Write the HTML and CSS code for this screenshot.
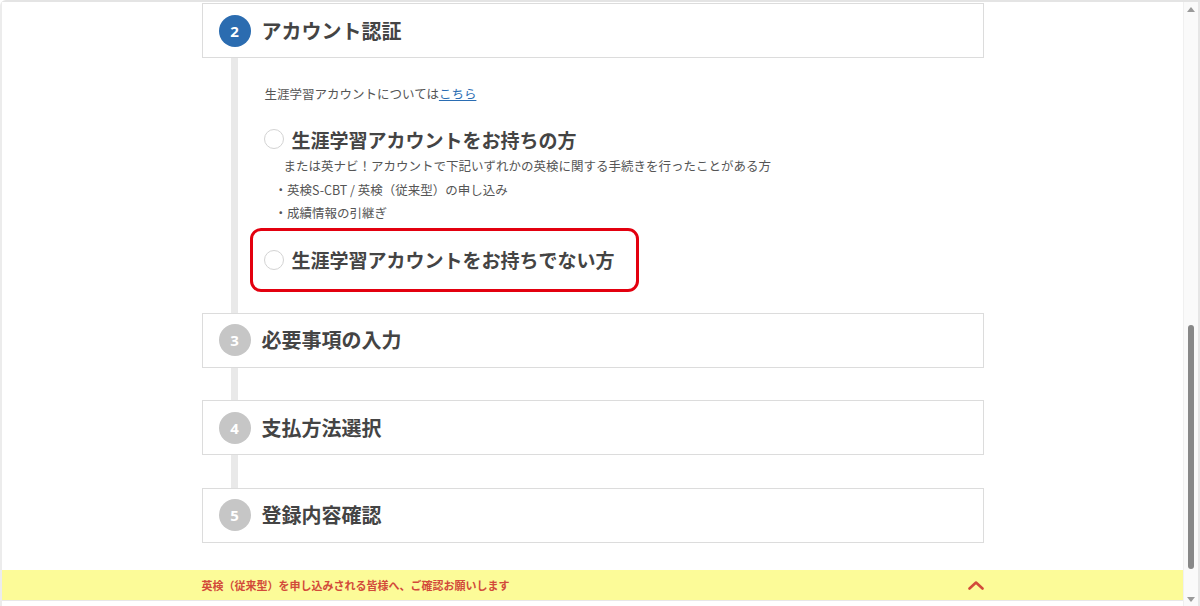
FILE: index.html
```html
<!DOCTYPE html>
<html lang="ja">
<head>
<meta charset="utf-8">
<title>申し込み</title>
<link rel="stylesheet" href="styles.css">
</head>
<body>
<div class="window">
  <div class="page">
    <div class="viewport">
      <div class="steps">
        <section class="step-card">
          <span class="step-num active">2</span>
          <h2 class="step-title">アカウント認証</h2>
        </section>
        <div class="step-body">
          <p class="note">生涯学習アカウントについては<a href="#" class="link">こちら</a></p>
          <div class="option">
            <div class="option-row">
              <span class="radio"></span>
              <span class="option-label">生涯学習アカウントをお持ちの方</span>
            </div>
            <p class="option-desc">または英ナビ！アカウントで下記いずれかの英検に関する手続きを行ったことがある方</p>
            <ul class="option-list">
              <li>・英検S-CBT / 英検（従来型）の申し込み</li>
              <li>・成績情報の引継ぎ</li>
            </ul>
          </div>
          <div class="option highlight">
            <div class="option-row">
              <span class="radio"></span>
              <span class="option-label">生涯学習アカウントをお持ちでない方</span>
            </div>
          </div>
        </div>
        <section class="step-card">
          <span class="step-num">3</span>
          <h2 class="step-title">必要事項の入力</h2>
        </section>
        <section class="step-card">
          <span class="step-num">4</span>
          <h2 class="step-title">支払方法選択</h2>
        </section>
        <section class="step-card">
          <span class="step-num">5</span>
          <h2 class="step-title">登録内容確認</h2>
        </section>
      </div>
    </div>
    <div class="notice-bar">
      <div class="notice-inner">
        <span class="notice-text">英検（従来型）を申し込みされる皆様へ、ご確認お願いします</span>
        <svg class="chevron" width="16" height="10" viewBox="0 0 16 10"><path d="M1.5 8.5 L8 2.5 L14.5 8.5" fill="none" stroke="#d24a3a" stroke-width="2.6" stroke-linecap="round" stroke-linejoin="round"/></svg>
      </div>
    </div>
    <div class="bottom-strip"></div>
  </div>
  <div class="scrollbar">
    <span class="arrow up"></span>
    <div class="track"><span class="thumb"></span></div>
    <span class="arrow down"></span>
  </div>
</div>
</body>
</html>
```

FILE: styles.css
```css
* { box-sizing: border-box; }
html, body { margin: 0; padding: 0; background: #fff; }
body {
  font-family: "Noto Sans CJK JP", "Noto Sans", sans-serif;
  color: #444;
  width: 1200px;
  height: 606px;
  overflow: hidden;
}
.window {
  display: flex;
  width: 1200px;
  height: 606px;
  border-top: 2px solid #e4e4e4;
  border-left: 2px solid #ececec;
  border-radius: 6px 0 0 0;
}
.page {
  flex: 1;
  display: flex;
  flex-direction: column;
  min-width: 0;
  background: #fff;
}
.viewport {
  flex: 1;
  overflow: hidden;
  padding-top: 1px;
}
.steps {
  position: relative;
  width: 782px;
  margin: 0 auto;
  display: flex;
  flex-direction: column;
}
.steps::before {
  content: "";
  position: absolute;
  left: 29px;
  width: 7px;
  top: 0;
  bottom: 0;
  background: #e9e9e9;
}
.step-card {
  position: relative;
  height: 55px;
  background: #fff;
  border: 1px solid #dcdcdc;
  display: flex;
  align-items: center;
  padding-left: 16px;
  margin-bottom: 32.5px;
}
.step-card:last-child { margin-bottom: 0; }
.step-card:first-child { margin-bottom: 0; }
.step-num {
  width: 32px;
  height: 32px;
  border-radius: 50%;
  background: #c6c6c6;
  color: #fff;
  font-family: "Open Sans", "Noto Sans", sans-serif;
  font-weight: 700;
  font-size: 15px;
  display: flex;
  align-items: center;
  justify-content: center;
  flex-shrink: 0;
}
.step-num.active { background: #2b6cb0; }
.step-title {
  margin: 0 0 0 11px;
  font-size: 20px;
  font-weight: 700;
  color: #444;
  line-height: 30px;
}
.step-body {
  position: relative;
  padding: 26px 0 21px 48px;
}
.note {
  margin: 0 0 20px 15px;
  font-size: 12.5px;
  line-height: 20px;
  color: #555;
}
.link {
  color: #2a6db3;
  text-decoration: underline;
}
.option {
  border: 3px solid transparent;
  border-radius: 11px;
  padding: 0 21px 0 11px;
  width: fit-content;
  margin-top: -3px;
}
.option.highlight {
  border-color: #e3000f;
  padding-top: 14px;
  padding-bottom: 14px;
  margin-top: 0;
}
.option-row {
  display: flex;
  align-items: center;
  height: 30px;
}
.radio {
  width: 20px;
  height: 20px;
  border: 1px solid #d3d3d3;
  border-radius: 50%;
  background: #fff;
  flex-shrink: 0;
}
.option-label {
  margin-left: 8px;
  font-size: 19px;
  font-weight: 700;
  color: #444;
}
.option-desc {
  margin: 0 0 0 20px;
  font-size: 12.5px;
  line-height: 23.5px;
  color: #555;
  white-space: nowrap;
}
.option-list {
  list-style: none;
  margin: 0 0 0 11px;
  padding: 0;
  font-size: 12.5px;
  line-height: 23.5px;
  color: #555;
}
.notice-bar {
  height: 30px;
  background: #fcfb98;
  flex-shrink: 0;
}
.notice-inner {
  width: 782px;
  margin: 0 auto;
  height: 100%;
  display: flex;
  align-items: center;
  justify-content: space-between;
}
.notice-text {
  font-size: 11px;
  font-weight: 700;
  color: #d24a3a;
}
.bottom-strip {
  height: 6px;
  flex-shrink: 0;
  background: #fff;
  border-top: 1px solid #e8e8e8;
}
.scrollbar {
  width: 17px;
  flex-shrink: 0;
  display: flex;
  flex-direction: column;
  align-items: center;
  background: #fafafa;
  border-left: 1px solid #f0f0f0;
  border-right: 2px solid #e6e6e6;
  padding: 5px 0 4px;
}
.arrow {
  width: 0;
  height: 0;
  border-left: 4px solid transparent;
  border-right: 4px solid transparent;
}
.arrow.up { border-bottom: 5px solid #9a9a9a; }
.arrow.down { border-top: 5px solid #9a9a9a; }
.track {
  flex: 1;
  width: 100%;
  display: flex;
  flex-direction: column;
  align-items: center;
  padding-top: 313px;
  padding-bottom: 28px;
}
.thumb {
  flex: 1;
  width: 6px;
  border-radius: 3px;
  background: #888;
}
```
